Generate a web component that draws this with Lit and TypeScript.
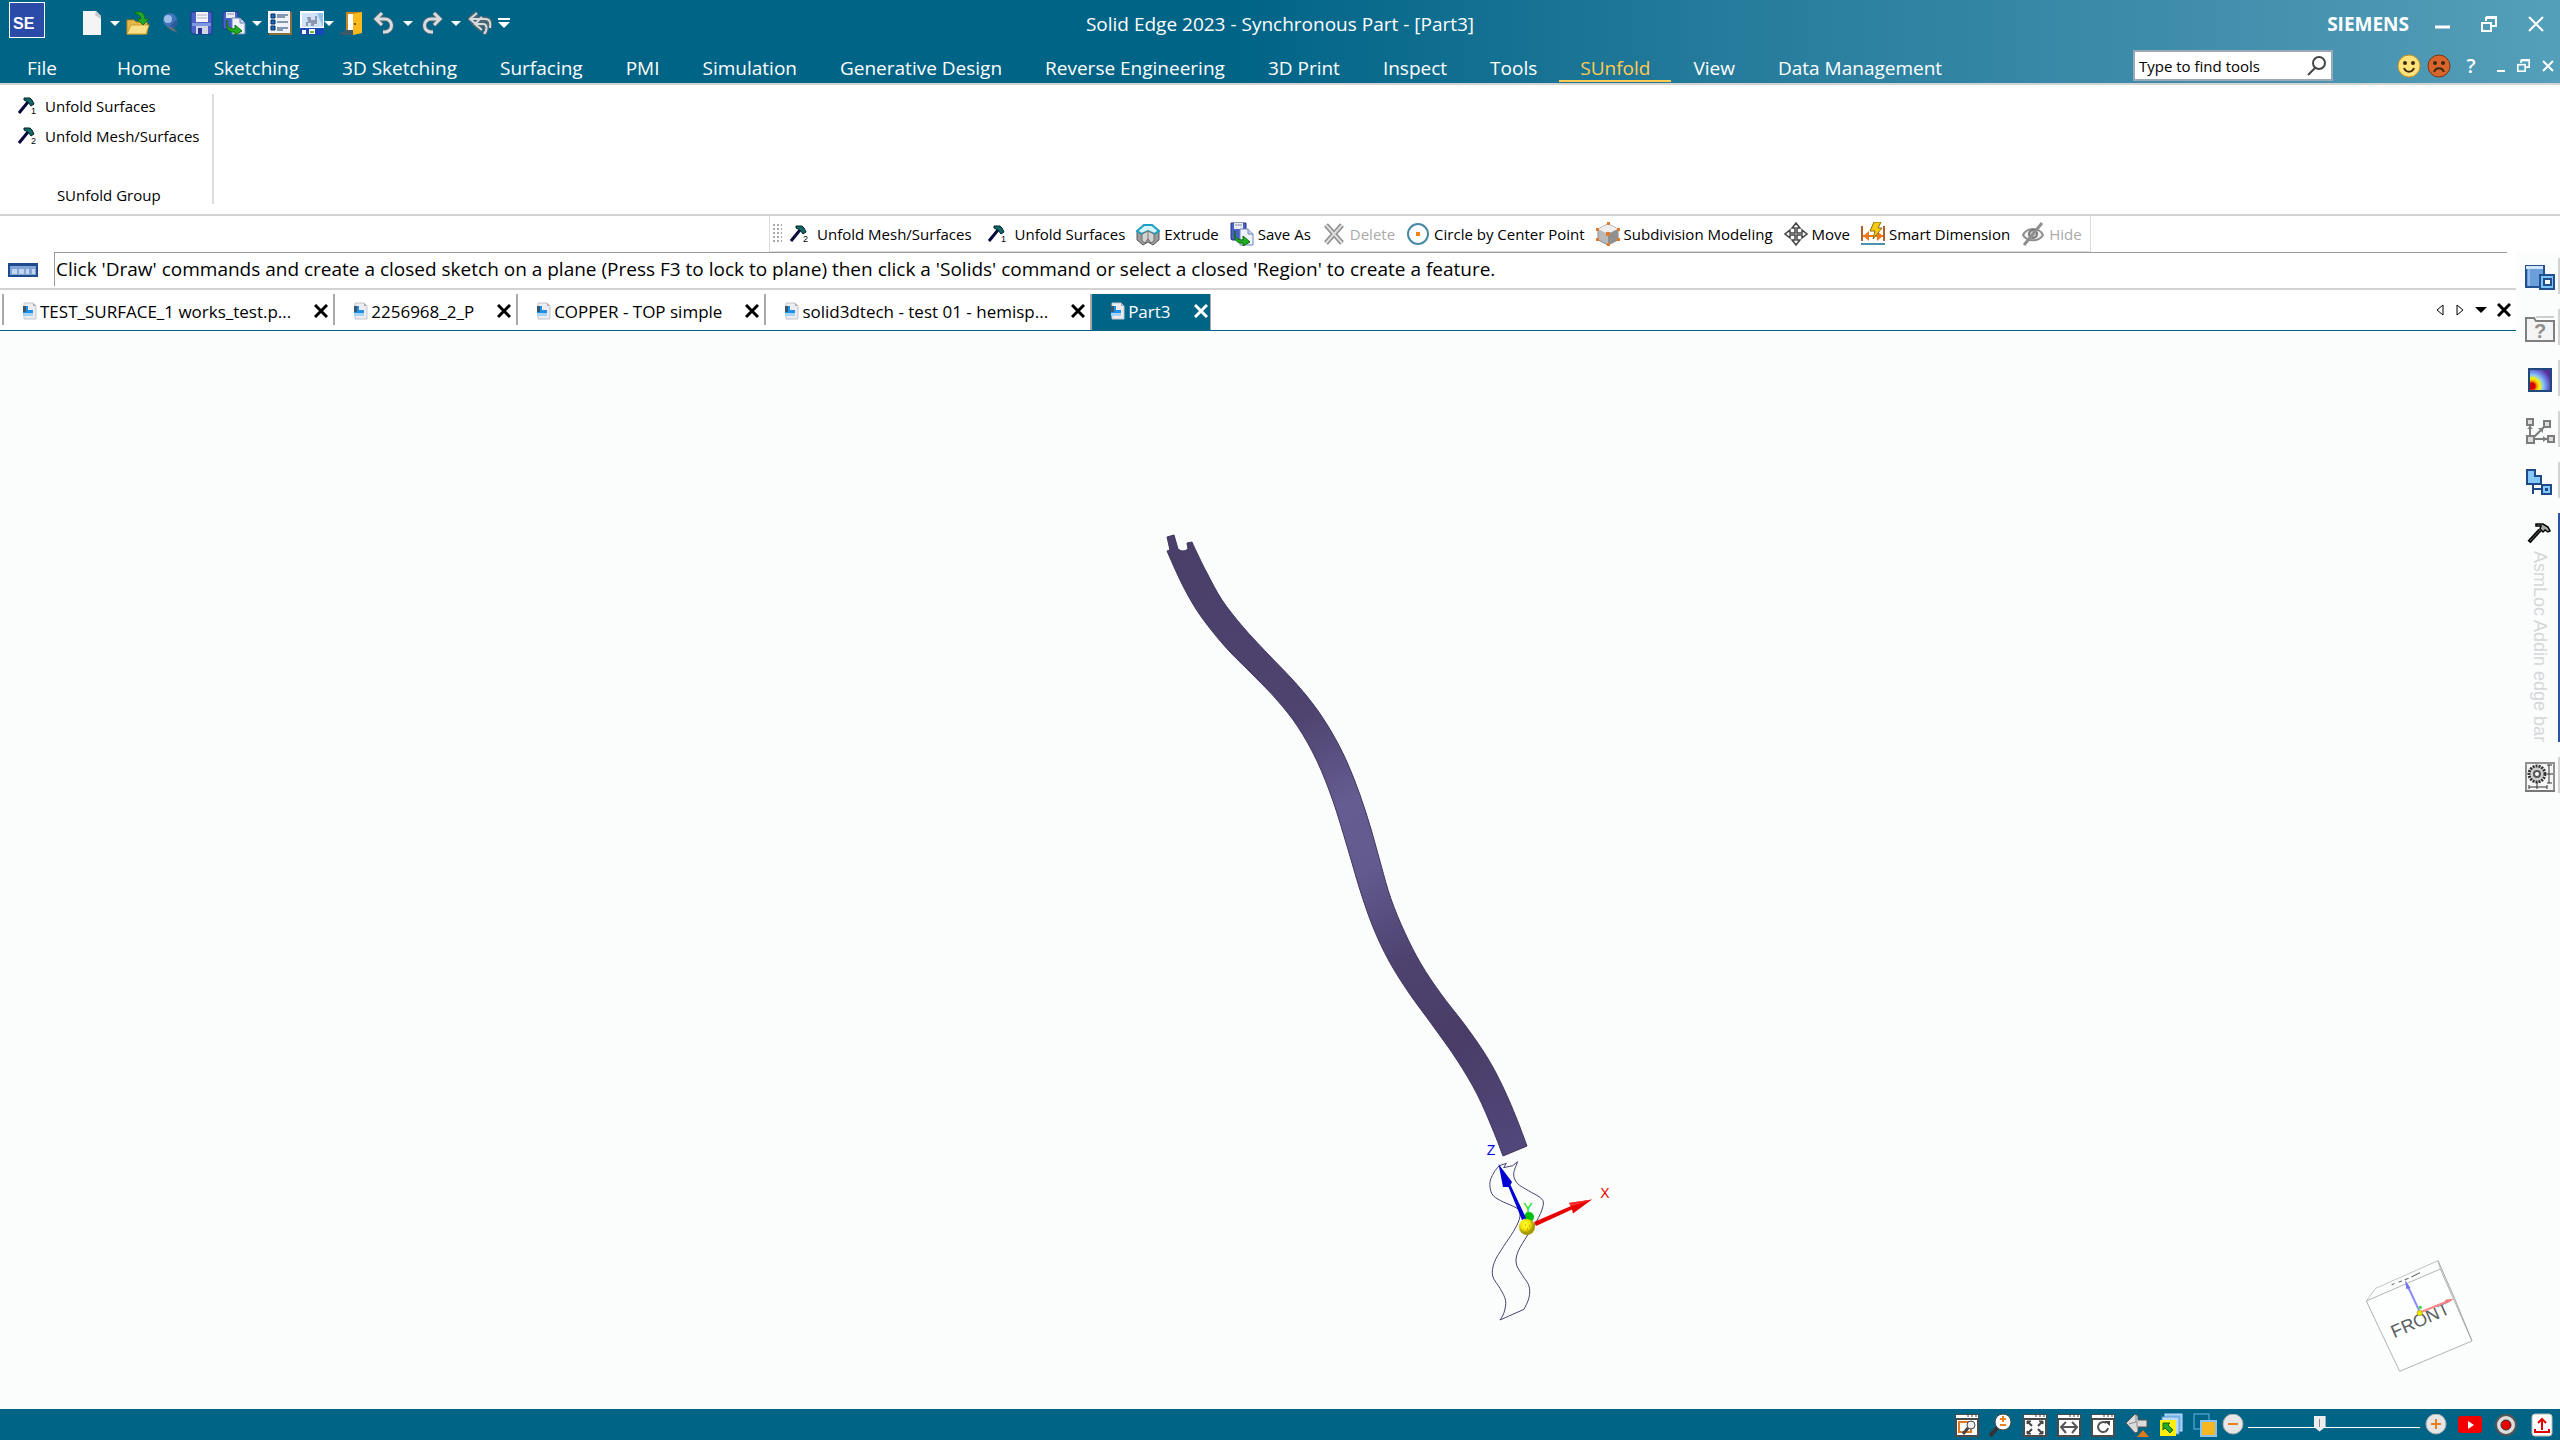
import { LitElement, html, svg, css, nothing, TemplateResult } from "lit";
import { customElement, state } from "lit/decorators.js";

type Pt = [number, number];

/** Catmull-Rom spline through the points, written as cubic segments. */
function spline(points: Pt[]): string {
  let d = "";
  for (let i = 0; i < points.length - 1; i++) {
    const p0 = points[Math.max(i - 1, 0)];
    const p1 = points[i];
    const p2 = points[i + 1];
    const p3 = points[Math.min(i + 2, points.length - 1)];
    const c1 = [p1[0] + (p2[0] - p0[0]) / 6, p1[1] + (p2[1] - p0[1]) / 6];
    const c2 = [p2[0] - (p3[0] - p1[0]) / 6, p2[1] - (p3[1] - p1[1]) / 6];
    d += ` C${c1.map((n) => n.toFixed(1))} ${c2.map((n) => n.toFixed(1))} ${p2}`;
  }
  return d;
}

const leftEdge: Pt[] = [
  [1167, 551], [1181, 582], [1196, 609], [1212, 631], [1230, 652], [1253, 675], [1277, 700],
  [1298, 727], [1317, 761], [1333, 801], [1347, 846], [1360, 890], [1373, 927], [1389, 961],
  [1409, 993], [1433, 1026], [1457, 1060], [1477, 1094], [1493, 1130], [1503, 1156],
];
const rightEdge: Pt[] = [
  [1527, 1146], [1516, 1117], [1503, 1087], [1487, 1057], [1465, 1025], [1441, 994], [1421, 964],
  [1405, 933], [1391, 899], [1381, 865], [1371, 829], [1360, 795], [1347, 762], [1331, 731],
  [1313, 704], [1292, 679], [1267, 653], [1243, 627], [1222, 600], [1207, 573], [1198, 555], [1192, 542],
];
const bandPath =
  `M${leftEdge[0]}` + spline(leftEdge) + ` L${rightEdge[0]}` + spline(rightEdge) +
  " L1187,543 L1188,549 Q1183,553 1178,549 L1174,535 L1167,537 L1170,550 Z";

const at = (pts: Pt[]): Pt[] => pts.map(([x, y]) => [1460 + x / 3, 1130 + y / 3] as Pt);
const wireLeft = at([[105, 122], [90, 155], [96, 192], [122, 212], [158, 228], [178, 242], [178, 268], [160, 305], [130, 350], [103, 397], [98, 438], [120, 475], [137, 512], [132, 548], [120, 570]]);
const wireRight = at([[192, 538], [207, 503], [207, 468], [188, 437], [169, 402], [174, 365], [203, 315], [236, 262], [250, 222], [241, 203], [205, 182], [172, 160], [161, 132], [173, 95]]);
const wireTop = at([[173, 95], [158, 107], [131, 113], [139, 100], [118, 107], [105, 122]]);
const wirePath =
  `M${wireLeft[0]}` + spline(wireLeft) + ` L${wireRight[0]}` + spline(wireRight) + " " +
  wireTop.map((p) => `L${p}`).join(" ") + " Z";

const box = (w: number, h: number, body: unknown) =>
  html`<svg width=${w} height=${h} viewBox="0 0 ${w} ${h}" aria-hidden="true">${body}</svg>`;

const caret = () => box(10, 5, svg`<path d="M0 0h10L5 5z" fill="#fff"/>`);

const floppy = svg`
  <path d="M1 1h21v22H3l-2-2z" fill="#4a62c4" stroke="#27348f"/>
  <rect x="6" y="1" width="12" height="10" fill="#f2f4f9"/><path d="M7 4h10M7 7h10" stroke="#a9b2cc"/>
  <rect x="2" y="12" width="19" height="3" fill="#7f96e0"/>
  <rect x="6" y="15" width="12" height="8" fill="#cfd6e8"/><rect x="8" y="17" width="4" height="6" fill="#27348f"/>`;
const floppyCopy = svg`
  <path d="M1 1h15v17H2l-1-1z" fill="#4a5fc4" stroke="#27348f"/><rect x="4" y="1" width="9" height="6" fill="#e8ecf5"/>
  <path d="M5 3h7" stroke="#8b93ad"/>
  <path d="M10 7h8l5 5v11H10z" fill="#eef2fa" stroke="#7384b8"/><path d="M18 7v5h5" fill="#c9d3ea" stroke="#7384b8"/>
  <path d="M5 9c-1 6 2 9 8 9v-4l7 6-7 4v-3C7 22 3 17 5 9z" fill="#1fae1f" stroke="#0b6e10"/>`;

const undo = svg`<path d="M10 2L4 8l6 6M5 8h8a6 6 0 0 1 0 13h-2" fill="none" stroke="#4d6672" stroke-width="5"/>
  <path d="M10 2L4 8l6 6M5 8h8a6 6 0 0 1 0 13h-2" fill="none" stroke="#d9dcde" stroke-width="3"/>`;
const redo = svg`<path d="M14 2l6 6-6 6M19 8h-8a6 6 0 0 0 0 13h2" fill="none" stroke="#4d6672" stroke-width="5"/>
  <path d="M14 2l6 6-6 6M19 8h-8a6 6 0 0 0 0 13h2" fill="none" stroke="#d9dcde" stroke-width="3"/>`;

const hammer = (n: string) => box(18, 18, svg`
  <path d="M1 16L10 5" stroke="#0a0a3c" stroke-width="3"/>
  <path d="M6 1h6l2 2 2 4-3 2-3-4-4-2z" fill="#0c6b68" stroke="#06201f"/>
  <text x="13" y="17" font-size="9" font-family="Liberation Sans, sans-serif" fill="#000">${n}</text>`);

const icons: Record<string, () => TemplateResult> = {
  doc: () => box(24, 24, svg`<path d="M3 0h13l5 5v19H3z" fill="#f4f4f4"/><path d="M16 0l5 5v3l-6-4z" fill="#c9c9cb"/>`),
  open: () => box(24, 24, svg`
    <path d="M1 9h7l2 2h11v12H1z" fill="#e6b84a" stroke="#b98818"/><path d="M5 14h18l-3 9H1z" fill="#fbe08a" stroke="#d0a030"/>
    <path d="M8 2c6-3 11 0 11 6h4l-6 6-6-6h4c0-3-3-5-7-6z" fill="#23a82b" stroke="#0f7019"/>`),
  pin: () => box(24, 24, svg`
    <path d="M11 12l9 10-7-3-5-4z" fill="#5e6f78"/><circle cx="12" cy="9" r="7" fill="#3f74b8"/><circle cx="10" cy="8" r="4" fill="#9cbfe8"/><path d="M12 15l6-6 2 4-4 4z" fill="#2c5a9c"/>`),
  save: () => box(24, 24, floppy),
  saveas: () => box(24, 24, floppyCopy),
  list: () => box(24, 24, svg`
    <rect x="1" y="1" width="23" height="23" fill="#8c6f3c"/><rect x="0" y="0" width="22" height="22" fill="#fff"/><rect x="1" y="1" width="21" height="21" fill="#eef4fb"/>
    <path d="M9 4h11M9 6h8M9 11h11M9 17h11M9 19h6" stroke="#1d3c66"/>
    <path d="M3 3h4v4H3zM3 9h4v4H3zM3 15h4v4H3z" fill="#1769c4" stroke="#0d2c58"/>`),
  screen: () => box(24, 24, svg`
    <rect x="0" y="0" width="24" height="24" fill="#fff"/><rect x="2" y="2" width="21" height="14" fill="#cfe2f8"/>
    <path d="M7 6h4v3h4V5h2v8h-3v2h-3v-3H8v3H6v-4h2z" fill="#8c98ad"/><path d="M17 2h6v14z" fill="#8fc0ee"/>
    <rect x="0" y="17" width="24" height="7" fill="#1748b8"/><rect x="2" y="19" width="4" height="4" fill="#fff"/><rect x="9" y="18" width="6" height="5" fill="#fff"/><path d="M10 20h4v2h-4z" fill="#6cc020"/>`),
  door: () => box(24, 24, svg`
    <rect x="6" y="1" width="16" height="21" fill="#c78a1a"/><rect x="8" y="3" width="6" height="18" fill="#fff"/>
    <path d="M13 3l9-2v21l-9 2z" fill="#fbb91c"/><path d="M15 12v2" stroke="#7a5300" stroke-width="2"/><path d="M0 22l6-3h7v5H0z" fill="#3c5a68"/>`),
  undo: () => box(24, 24, undo),
  redo: () => box(24, 24, redo),
  undoall: () => box(24, 24, svg`
    <path d="M9 2L2 8l7 6M3 8h14c5 0 6 4 5 9M14 6l-7 7 7 6M8 13h7c4 0 5 5 1 10" fill="none" stroke="#4d6672" stroke-width="5"/>
    <path d="M9 2L2 8l7 6M3 8h14c5 0 6 4 5 9M14 6l-7 7 7 6M8 13h7c4 0 5 5 1 10" fill="none" stroke="#d9dcde" stroke-width="2"/>`),
  hammer1: () => hammer("1"),
  hammer2: () => hammer("2"),
  extrude: () => box(24, 24, svg`
    <path d="M1 9l7-6h8l7 6v9l-6 5-5-3-5 3-6-5z" fill="#9b9b9b" stroke="#5a5a5a"/>
    <path d="M1 9l7-6h8l7 6-5 3-6-3-6 3z" fill="#d6f4fb" stroke="#1c9fc4" stroke-width="2"/><path d="M6 12l6-3 6 3v7l-3 2-3-4-3 4-3-2z" fill="#d4d4d4" stroke="#6c6c6c"/><path d="M12 9v8" stroke="#777"/>`),
  del: () => box(24, 24, svg`<path d="M4 3l16 18M20 3L4 21" stroke="#8c8c8c" stroke-width="5"/><path d="M4 3l16 18M20 3L4 21" stroke="#dedede" stroke-width="2"/>`),
  circle: () => box(24, 24, svg`<circle cx="12" cy="12" r="10" fill="#fff" stroke="#4a89a5" stroke-width="2"/><rect x="10" y="10" width="4" height="4" fill="#f08018"/>`),
  subdiv: () => box(24, 24, svg`
    <path d="M12 2l10 5v11l-10 5-10-5V7z" fill="#b9b9b9" stroke="#8a8a8a"/><path d="M12 2l10 5-10 5L2 7z" fill="#eee"/><path d="M12 12l10-5v11l-10 5z" fill="#909090"/>
    <path d="M11 0h3v3h-3zM0 6h3v3H0zM21 6h3v3h-3zM10 10h4v4h-4zM0 16h3v3H0zM21 16h3v3h-3zM11 21h3v3h-3z" fill="#e07a28"/>`),
  move: () => box(24, 24, svg`
    <path d="M12 1l4 5h-3v5h5V8l5 4-5 4v-3h-5v5h3l-4 5-4-5h3v-5H6v3l-5-4 5-4v3h5V6H8z" fill="#f0f0f0" stroke="#444" stroke-width="1.500"/>`),
  dim: () => box(24, 24, svg`
    <path d="M1 4v15M23 4v15" stroke="#b06028" stroke-width="2"/><path d="M2 14h20" stroke="#ee7a20" stroke-width="2"/><path d="M2 14l6-5v10zM22 14l-6-5v10z" fill="#ee7a20"/>
    <path d="M13 0h7l-3 6h4l-9 11 2-8h-5z" fill="#f7cc10" stroke="#8a6a10"/><path d="M0 22h24" stroke="#4a93ad" stroke-width="2"/>`),
  hide: () => box(24, 24, svg`
    <path d="M2 13c4-8 16-8 20 0-4 7-16 7-20 0z" fill="#f2f2f2" stroke="#8e8e8e" stroke-width="2"/><circle cx="12" cy="12" r="4" fill="#c8c8c8" stroke="#777" stroke-width="2"/><path d="M3 23L21 1" stroke="#8e8e8e" stroke-width="3"/>`),
  /* edge bar */
  library: () => box(30, 26, svg`
    <rect x="1" y="1" width="18" height="21" fill="#6a9fdc" stroke="#23508f" stroke-width="2"/><rect x="1" y="1" width="17" height="3" fill="#cfe6fb"/><path d="M4 4v17" stroke="#b8d6f5"/>
    <rect x="15" y="10" width="14" height="14" fill="#7cc4fb" stroke="#23508f" stroke-width="2"/><rect x="19" y="14" width="7" height="6" fill="#fff" stroke="#23508f" stroke-width="2"/>`),
  help: () => box(30, 26, svg`
    <path d="M1 2h8l2 3h18v20H1z" fill="#f4f4f4" stroke="#808080" stroke-width="2"/><path d="M11 1h18" stroke="#a0a0a0"/>
    <text x="15" y="22" text-anchor="middle" font-size="20" font-weight="700" font-family="Liberation Sans, sans-serif" fill="#909090">?</text>`),
  heat: () => box(30, 26, svg`
    <defs><radialGradient id="heat" gradientUnits="userSpaceOnUse" cx="7" cy="19" r="20"><stop offset=".15" stop-color="#d80000"/><stop offset=".25" stop-color="#f8a000"/><stop offset=".38" stop-color="#f8f400"/><stop offset=".55" stop-color="#8cc8f4"/><stop offset=".75" stop-color="#6a80e0"/><stop offset="1" stop-color="#5a2aa0"/></radialGradient></defs>
    <rect x="4" y="2" width="22" height="22" fill="url(#heat)" stroke="#20487c" stroke-width="2"/>`),
  relations: () => box(30, 26, svg`
    <path d="M5 6v14M8 20l12-12M6 21h18" stroke="#7c7c7c" stroke-width="2" fill="none"/><path d="M2 11l3-3 3 3zM13 10h5v5zM18 18v6l4-3z" fill="#7c7c7c"/>
    <path d="M2 1h6v6H2zM19 3h6v6h-6zM2 18h7v7H2zM23 18h6v6h-6z" fill="#ddd" stroke="#7c7c7c" stroke-width="2"/>`),
  assembly: () => box(30, 26, svg`
    <path d="M2 1h8v6h6v8H2z" fill="#85c8fb" stroke="#1f4a8a" stroke-width="2"/><path d="M8 15v10M8 20h10" stroke="#1f4a8a" stroke-width="2"/>
    <rect x="17" y="16" width="9" height="9" fill="#85c8fb" stroke="#1f4a8a" stroke-width="2"/><rect x="20" y="19" width="3" height="3" fill="#1f4a8a"/>`),
  addin: () => box(30, 24, svg`
    <path d="M4 21L15 9" stroke="#000" stroke-width="4"/><path d="M5 20L15 9" stroke="#666" stroke-width="1"/>
    <path d="M11 3h7l5 3 2 4-2 1-3-2-2 2-3-3 1-3h-5z" fill="#a8a8a8" stroke="#000" stroke-width="1.500"/>`),
  gear: () => box(30, 30, svg`
    <rect x="1" y="1" width="28" height="28" fill="#f6f6f6" stroke="#909090" stroke-width="2"/><path d="M0 29h30" stroke="#777" stroke-width="2"/>
    <circle cx="12" cy="12" r="8" fill="#d0d0d0" stroke="#333" stroke-width="3" stroke-dasharray="2 1"/><circle cx="12" cy="12" r="3" fill="#fff" stroke="#555" stroke-width="2"/>
    <path d="M24 3v18M22 3h5M22 21h5M22 12h6M4 25h18M4 23v4M22 23v4M12 20v7" stroke="#333" fill="none"/>`),
};

const win = (body: unknown) => box(24, 24, svg`
  <rect x="0" y="1" width="24" height="23" fill="#4a4a4a"/><rect x="1" y="2" width="22" height="3" fill="#fff"/><path d="M12 3h2M16 3h2M20 3h2" stroke="#444"/>
  <rect x="2" y="7" width="20" height="15" fill="#fff"/>${body}`);

const statusIcons: [string, () => TemplateResult][] = [
  ["Zoom Area", () => win(svg`<rect x="4" y="9" width="12" height="10" fill="none" stroke="#e07a20" stroke-width="2"/><circle cx="16" cy="12" r="4" fill="#eee" stroke="#444"/><path d="M13 15l-5 6" stroke="#444" stroke-width="3"/>`)],
  ["Zoom", () => box(24, 24, svg`<path d="M9 14l-8 9" stroke="#333" stroke-width="4"/><circle cx="14" cy="9" r="8" fill="#fff" stroke="#444"/><path d="M14 3v6M11 6h6M11 12h6" stroke="#e88020" stroke-width="2"/>`)],
  ["Fit", () => win(svg`<path d="M4 11V8h4zM4 18v3h4zM20 11V8h-4zM20 18v3h-4z" fill="#444" stroke="#444"/><path d="M5 9l4 4M5 20l4-4M19 9l-4 4M19 20l-4-4" stroke="#444" stroke-width="2"/>`)],
  ["Pan", () => win(svg`<path d="M9 9l-5 5 5 6M15 9l5 5-5 6M5 14h14" fill="none" stroke="#555" stroke-width="2"/>`)],
  ["Rotate", () => win(svg`<path d="M15 10a5 5 0 1 0 2 5" fill="none" stroke="#555" stroke-width="2"/><path d="M13 8h6v5z" fill="#444"/>`)],
  ["Previous View", () => box(24, 24, svg`<path d="M1 10L10 1l3 2v4h9v7h-9v5l-3 1z" fill="#dcdcdc" stroke="#555"/><path d="M11 2v7l-7 2M12 8v6" fill="none" stroke="#888"/><path d="M12 24l6-7 6 7z" fill="#e07818"/>`)],
  ["View Styles", () => box(24, 24, svg`<rect x="6" y="1" width="17" height="17" fill="#8cc4f2" stroke="#c6e2fa"/><rect x="3" y="4" width="17" height="17" fill="#b9dcf6" stroke="#5a9ad6"/><rect x="1" y="7" width="16" height="16" fill="#ffee10"/><path d="M4 10h7l-2 2 5 5-3 3-5-5-2 2z" fill="#2aa82a" stroke="#0d6a10"/>`)],
  ["Color Manager", () => box(24, 24, svg`<rect x="1" y="1" width="15" height="15" fill="none" stroke="#6eb2e8" stroke-width="1"/><rect x="8" y="8" width="15" height="15" fill="#f5b820" stroke="#8cc0ee" stroke-width="2"/>`)],
];

const face = (fill: string, rim: string, mouth: string) => box(24, 24, svg`
  <circle cx="12" cy="12" r="11" fill=${fill} stroke=${rim}/><circle cx="8" cy="9" r="2" fill="#3a2a10"/><circle cx="16" cy="9" r="2" fill="#3a2a10"/>
  <path d=${mouth} fill="none" stroke="#3a2a10" stroke-width="2"/>`);
const restore = (s: number) => html`<svg width=${s} height=${s} viewBox="0 0 16 16" aria-hidden="true"><path d="M5 1h10v9h-4M5 1v4" fill="none" stroke="#fff" stroke-width="2"/><path d="M5 2h10" stroke="#fff" stroke-width="2"/><rect x="1" y="7" width="9" height="8" fill="none" stroke="#fff" stroke-width="2"/></svg>`;
const cross = (s: number, c: string, w: number) => box(s, s, svg`<path d="M1 1L${s - 1} ${s - 1}M${s - 1} 1L1 ${s - 1}" stroke=${c} stroke-width=${w}/>`);
const partIcon = () => box(15, 18, svg`
  <path d="M2 1h9l3 3v13H2z" fill="#ececf2" stroke="#c4c4cc"/><path d="M11 1v3h3z" fill="#aaa"/><path d="M1 4h5v4h5v6H1z" fill="#1e90e8"/><path d="M1 4h3v6H1z" fill="#3c5668"/><path d="M1 11h10v3H1z" fill="#a8d4f4"/>`);

const quickBar: [string, string, string?][] = [
  ["New", "doc", "caret"], ["Open", "open"], ["Pin", "pin"], ["Save", "save"], ["Save As", "saveas", "caret"],
  ["Properties", "list"], ["Display", "screen", "caret tuck"], ["Close", "door"],
  ["Undo", "undo", "caret wide"], ["Redo", "redo", "caret wide"], ["Undo All", "undoall"],
];
const menus = ["Home", "Sketching", "3D Sketching", "Surfacing", "PMI", "Simulation", "Generative Design", "Reverse Engineering", "3D Print", "Inspect", "Tools", "SUnfold", "View", "Data Management"];
const commands: [string, string, boolean?][] = [
  ["Unfold Mesh/Surfaces", "hammer2"], ["Unfold Surfaces", "hammer1"], ["Extrude", "extrude"], ["Save As", "saveas"], ["Delete", "del", true],
  ["Circle by Center Point", "circle"], ["Subdivision Modeling", "subdiv"], ["Move", "move"], ["Smart Dimension", "dim"], ["Hide", "hide", true],
];
const documents = ["TEST_SURFACE_1 works_test.p...", "2256968_2_P", "COPPER - TOP simple", "solid3dtech - test 01 - hemisp...", "Part3"];
const panes: [string, string][] = [["Parts Library", "library"], ["Help", "help"], ["Simulation", "heat"], ["Relations", "relations"], ["Family", "assembly"]];

@customElement("app-root")
export class AppRoot extends LitElement {
  @state() private menu = "SUnfold";
  @state() private active = "Part3";

  static styles = css`
    :host { display: flex; flex-direction: column; min-height: 100vh; background: #fff; color: #000; font-family: "Open Sans", "Noto Sans", sans-serif; font-size: 15px; }
    * { box-sizing: border-box; }
    button, input { font: inherit; color: inherit; margin: 0; padding: 0; border: 0; background: none; }
    button { display: flex; align-items: center; justify-content: center; white-space: nowrap; flex: none; }
    svg { display: block; flex: none; }
    .header { background: linear-gradient(90deg, #006487 0 48%, #267c9c 68%, #3f8dab 85%, #549fb9 100%); color: #fff; border-bottom: 2px solid #d3d3d3; }
    .titlebar { display: grid; grid-template-columns: 1fr auto 1fr; height: 48px; }
    .quick { display: flex; height: 46px; align-items: center; padding-left: 9px; }
    .logo { width: 36px; height: 36px; margin: 0 31px 6px 0; border: 1px solid #fff; background: #2b4ba8; font: 700 16px "Liberation Sans", sans-serif; line-height: 42px; padding-left: 3px; }
    .qicon { width: 32px; height: 32px; }
    .caret { width: 14px; height: 32px; }
    .tuck { margin-left: -6px; }
    .wide { width: 16px; }
    .title { align-self: center; font-size: 19px; margin: 0; font-weight: 400; }
    .winctl { display: flex; justify-content: flex-end; align-items: center; padding-right: 16px; }
    .brand { font-weight: 700; font-size: 19px; margin-right: 26px; }
    .winctl button { height: 32px; margin-left: 31px; }
    .winctl .first { margin-left: 0; }
    .menubar { display: flex; height: 35px; font-size: 19px; }
    .file { width: 84px; padding-top: 5px; }
    .menus { display: flex; gap: 1px; padding-left: 12px; }
    .menu { padding: 8px 21px 0; height: 34px; border-bottom: 2px solid transparent; }
    .menu.on { color: #ffcb50; border-bottom-color: #ffcb50; }
    .tools { display: flex; align-items: center; margin-left: auto; }
    .search { display: flex; align-items: center; width: 200px; height: 31px; background: #fff; border: 2px solid #9aa9b8; margin-right: 64px; padding: 0 4px; color: #222; }
    .search input { flex: 1; min-width: 0; font-size: 15px; color: #000; outline: 0; }
    .search input::placeholder { color: #000; opacity: 1; }
    .tools button { height: 24px; }
    .tools .face { margin-right: 6px; }
    .tools .query { font-size: 20px; font-weight: 600; width: 24px; margin: 0 8px 0 2px; line-height: 24px; }
    .tools .mini { margin: 0 6px; }
    .ribbon { height: 131px; padding: 9px 0; border-bottom: 2px solid #d3d3d3; display: flex; }
    .group { display: flex; flex-direction: column; padding: 0 12px 0 18px; border-right: 2px solid #ddd; height: 110px; }
    .group button { height: 30px; margin-top: -3px; margin-bottom: 3px; gap: 9px; justify-content: flex-start; }
    .group span.label { margin-top: auto; text-align: center; line-height: 18px; }
    .cmdrow { display: grid; grid-template-columns: 770fr auto 470fr; height: 36px; }
    .cmdbar { grid-column: 2; display: flex; align-items: center; gap: 11px; padding: 0 8px 0 3px; border: 1px solid #ddd; border-top: 0; }
    .cmdbar button { gap: 4px; height: 30px; }
    .cmdbar button[disabled] { color: #aaa; }
    .slot { width: 24px; display: flex; justify-content: center; }
    .slot.broad { width: 28px; }
    .grip { width: 9px; height: 20px; margin-right: -8px; background: radial-gradient(circle at 1px 1px, #a8a8b0 1px, transparent 1px) 0 0 / 4px 4px; }
    .body { flex: 1; display: flex; }
    .work { flex: 1; min-width: 0; display: flex; flex-direction: column; }
    .prompt { display: flex; height: 38px; border-bottom: 2px solid #d3d3d3; padding-right: 9px; }
    .prompt .mark { width: 54px; padding: 11px 0 0 8px; }
    .prompt p { flex: 1; margin: 0 0 2px; padding-left: 1px; border: 1px solid #999; border-width: 1px 0 0 1px; font-size: 19px; line-height: 33px; white-space: nowrap; }
    .docs { display: flex; height: 41px; padding: 4px 0 0 2px; border-bottom: 1px solid #006487; font-size: 17px; }
    .doc { display: flex; align-items: center; height: 31px; padding: 3px 5px 0 18px; border-left: 2px solid #a8a8a8; }
    .doc button { height: 28px; }
    .doc .name { gap: 3px; margin-right: 23px; }
    .doc.on { height: 36px; padding-right: 2px; padding-bottom: 5px; background: #006487; color: #fff; border-right: 1px solid #a8a8a8; }
    .nav { display: flex; gap: 10px; margin-left: auto; padding-right: 5px; height: 32px; align-items: center; }
    .canvas { flex: 1; position: relative; background: #fafdfc; }
    .scene { position: absolute; inset: 0; width: 100%; height: 100%; }
    .cube { position: absolute; right: 16px; bottom: 19px; }
    .edge { width: 44px; background: #fafdfc; padding-top: 6px; display: flex; flex-direction: column; gap: 15px; }
    .edge button { width: 44px; height: 36px; border-right: 2px solid #d3d3d3; padding: 4px 0 0 5px; }
    .edge .open { height: 229px; flex-direction: column; justify-content: flex-start; gap: 6px; padding-top: 8px; border-right-color: #2a55a0; color: #d5d7d8; font: 18px "Liberation Sans", sans-serif; }
    .edge .open span { writing-mode: vertical-rl; line-height: 24px; }
    .status { display: flex; align-items: center; height: 31px; background: #006487; justify-content: flex-end; }
    .status button { width: 34px; height: 30px; }
    .status .round { width: 22px; }
    .status .end { width: 36px; }
    .status .end.tube { margin-left: 5px; }
    .range { appearance: none; width: 172px; height: 30px; margin: 0 5px 0 4px; background: linear-gradient(#fff, #fff) 0 17px / 100% 1px no-repeat; }
    .range::-webkit-slider-thumb { appearance: none; width: 12px; height: 16px; margin-top: -2px; background: linear-gradient(#888, #888) 50% 3px / 1px 8px no-repeat, #eee; clip-path: polygon(0 0, 100% 0, 100% 70%, 50% 100%, 0 70%); }
  `;

  private scene() {
    return svg`
      <defs>
        <linearGradient id="band" gradientUnits="userSpaceOnUse" x1="1195" y1="540" x2="1500" y2="1156">
          <stop offset="0" stop-color="#4a3f69"/><stop offset=".3" stop-color="#4f4470"/><stop offset=".44" stop-color="#655c91"/>
          <stop offset=".54" stop-color="#635a8f"/><stop offset=".68" stop-color="#4e4370"/><stop offset=".82" stop-color="#493c67"/><stop offset="1" stop-color="#51477a"/>
        </linearGradient>
        <radialGradient id="ball" cx=".4" cy=".35"><stop offset="0" stop-color="#ffff40"/><stop offset=".6" stop-color="#f4e800"/><stop offset="1" stop-color="#a89a00"/></radialGradient>
      </defs>
      <path d=${bandPath} fill="url(#band)" stroke="#41365f"/>
      <path d=${wirePath} fill="none" stroke="#4b4070"/>
      <circle cx="1529" cy="1217" r="5" fill="#00c010"/>
      <path d="M1534 1222L1571 1206L1569 1203L1592 1199.500L1573 1213.500L1572 1209.500L1536 1226z" fill="#e60000"/>
      <path d="M1569 1203l23-3.500-21 7z" fill="#ff2a2a"/>
      <path d="M1522 1220L1508.500 1187L1503 1187L1498.500 1164L1512 1182L1510.500 1185L1526 1218z" fill="#0000d2"/>
      <circle cx="1527" cy="1227" r="8" fill="url(#ball)"/>
      <path d="M1525 1225h1M1529 1226h1M1527 1229h1" stroke="#e06000"/>
      <g font-family="Liberation Sans, sans-serif" font-size="14" text-anchor="middle">
        <text x="1491" y="1155" fill="#0000e6">Z</text><text x="1605" y="1198" fill="#e60000">X</text><text x="1528" y="1213" fill="#00e000">Y</text>
      </g>`;
  }

  private cube() {
    return html`<svg class="cube" width="160" height="150" viewBox="0 0 480 450" role="img" aria-label="View cube">
      <path d="M79 183L301 87L396 303L179 394z" fill="#fdfefe" stroke="#b2b4b4" stroke-width="3"/>
      <path d="M79 183L107 145L294 62L301 87" fill="none" stroke="#c2c4c4" stroke-width="3"/>
      <path d="M294 62L345 178L396 303" fill="none" stroke="#a4a6a6" stroke-width="3"/>
      <path d="M155 134l8-3M176 126l10-3M194 119l12-4M214 111l26-13" stroke="#555" stroke-width="3"/>
      <text transform="translate(163 295) rotate(-24)" font-family="Liberation Sans, sans-serif" font-size="54" fill="#5c5e5e">FRONT</text>
      <path d="M239 215L203 138" stroke="#8a8aff" stroke-width="6"/><path d="M195 120l16 23-12 5z" fill="#7474ea"/>
      <path d="M243 216L325 183" stroke="#ff8a8a" stroke-width="6"/><path d="M342 176l-27 3 5 12z" fill="#f07878"/>
      <circle cx="241" cy="202" r="5" fill="#40e040"/><circle cx="239" cy="219" r="8" fill="#e8e800" stroke="#a8a000" stroke-width="2"/>
    </svg>`;
  }

  render() {
    return html`
      <header class="header">
        <div class="titlebar">
          <div class="quick">
            <div class="logo">SE</div>
            ${quickBar.map(([label, icon, drop]) => html`
              <button class="qicon" aria-label=${label}>${icons[icon]()}</button>
              ${drop ? html`<button class=${drop} aria-label="${label} options">${caret()}</button>` : nothing}`)}
            <button class="caret wide" aria-label="Customize">${box(12, 10, svg`<path d="M0 1h12" stroke="#fff" stroke-width="2"/><path d="M0 4h12l-6 6z" fill="#fff"/>`)}</button>
          </div>
          <h1 class="title">Solid Edge 2023 - Synchronous Part - [Part3]</h1>
          <div class="winctl">
            <span class="brand">SIEMENS</span>
            <button class="first" aria-label="Minimize">${box(15, 16, svg`<path d="M0 11h15" stroke="#fff" stroke-width="3"/>`)}</button>
            <button aria-label="Restore">${restore(16)}</button>
            <button aria-label="Close window">${cross(16, "#fff", 2)}</button>
          </div>
        </div>
        <div class="menubar">
          <button class="file">File</button>
          <nav class="menus">
            ${menus.map((m) => html`<button class="menu ${m === this.menu ? "on" : ""}" @click=${() => (this.menu = m)}>${m}</button>`)}
          </nav>
          <div class="tools">
            <label class="search"><input type="search" aria-label="Type to find tools" placeholder="Type to find tools" />
              ${box(20, 20, svg`<circle cx="12" cy="7" r="6" fill="none" stroke="#444" stroke-width="2"/><path d="M8 12l-7 7" stroke="#444" stroke-width="2"/>`)}</label>
            <button class="face" aria-label="Like">${face("#ffe27a", "#c8921c", "M7 14c2 5 8 5 10 0")}</button>
            <button class="face" aria-label="Dislike">${face("#d9652c", "#7c3410", "M7 18c2-5 8-5 10 0")}</button>
            <button class="query" aria-label="Help">?</button>
            <button class="mini" aria-label="Minimize document">${box(8, 14, svg`<path d="M0 12h8" stroke="#fff" stroke-width="2"/>`)}</button>
            <button class="mini" aria-label="Restore document">${restore(13)}</button>
            <button class="mini" aria-label="Close document">${cross(12, "#fff", 2)}</button>
          </div>
        </div>
      </header>

      <section class="ribbon">
        <div class="group">
          <button>${hammer("1")}Unfold Surfaces</button>
          <button>${hammer("2")}Unfold Mesh/Surfaces</button>
          <span class="label">SUnfold Group</span>
        </div>
      </section>

      <div class="cmdrow">
        <div class="cmdbar">
          <span class="grip"></span>
          ${commands.map(([label, icon, off]) => html`
            <button ?disabled=${!!off}><span class="slot ${icon.startsWith("hammer") ? "broad" : ""}">${icons[icon]()}</span>${label}</button>`)}
        </div>
      </div>

      <div class="body">
        <main class="work">
          <div class="prompt">
            <span class="mark">${box(30, 14, svg`<rect width="30" height="14" fill="#1f4a8c"/><rect x="2" y="3" width="26" height="9" fill="#7ea4d8"/><path d="M4 6h5v5H4zM11 6h5v5h-5zM18 6h3v5h-3zM24 6h3v5h-3z" fill="#c4d6ee"/>`)}</span>
            <p>Click 'Draw' commands and create a closed sketch on a plane (Press F3 to lock to plane) then click a 'Solids' command or select a closed 'Region' to create a feature.</p>
          </div>
          <div class="docs">
            ${documents.map((d) => html`
              <div class="doc ${d === this.active ? "on" : ""}">
                <button class="name" @click=${() => (this.active = d)}>${partIcon()}${d}</button>
                <button aria-label="Close ${d}">${cross(14, d === this.active ? "#fff" : "#000", 3)}</button>
              </div>`)}
            <div class="nav">
              <button aria-label="Previous tab">${box(10, 12, svg`<path d="M8 1v10L2 6z" fill="none" stroke="#000"/>`)}</button>
              <button aria-label="Next tab">${box(10, 12, svg`<path d="M2 1v10l6-5z" fill="none" stroke="#000"/>`)}</button>
              <button aria-label="Tab list">${box(12, 6, svg`<path d="M0 0h12L6 6z"/>`)}</button>
              <button aria-label="Close tab">${cross(14, "#000", 3)}</button>
            </div>
          </div>
          <div class="canvas">
            <svg class="scene" viewBox="0 331 2516 1078" role="img" aria-label="Part model">${this.scene()}</svg>
            ${this.cube()}
          </div>
        </main>
        <aside class="edge">
          ${panes.map(([label, icon]) => html`<button aria-label=${label}>${icons[icon]()}</button>`)}
          <button class="open">${icons.addin()}<span>AsmLoc Addin edge bar</span></button>
          <button aria-label="Settings">${icons.gear()}</button>
        </aside>
      </div>

      <footer class="status">
        ${statusIcons.map(([label, icon]) => html`<button aria-label=${label}>${icon()}</button>`)}
        <button class="round" aria-label="Zoom out">${box(22, 22, svg`<circle cx="11" cy="10" r="10" fill="#e6e6e6" stroke="#aaa"/><path d="M6 10h10" stroke="#e88020" stroke-width="2"/>`)}</button>
        <input class="range" type="range" min="0" max="100" value="41" aria-label="Zoom level" />
        <button class="round" aria-label="Zoom in">${box(22, 22, svg`<circle cx="11" cy="10" r="10" fill="#e6e6e6" stroke="#aaa"/><path d="M6 10h10M11 5v10" stroke="#e88020" stroke-width="2"/>`)}</button>
        <button class="end tube" aria-label="Video">${box(24, 18, svg`<rect width="24" height="17" rx="3" fill="#f40000"/><path d="M10 5l6 4-6 4z" fill="#fff"/>`)}</button>
        <button class="end" aria-label="Record">${box(24, 24, svg`<circle cx="12" cy="12" r="10" fill="#ddd" stroke="#555" stroke-width="2"/><circle cx="12" cy="12" r="5" fill="#e80000" stroke="#333" stroke-width="1"/>`)}</button>
        <button class="end" aria-label="Upload">${box(22, 24, svg`<rect x="1" y="1" width="20" height="22" rx="3" fill="#fff" stroke="#bbb"/><path d="M11 17V6M7 10l4-4 4 4M4 16v3h14v-3" fill="none" stroke="#e00000" stroke-width="2"/>`)}</button>
      </footer>`;
  }
}
